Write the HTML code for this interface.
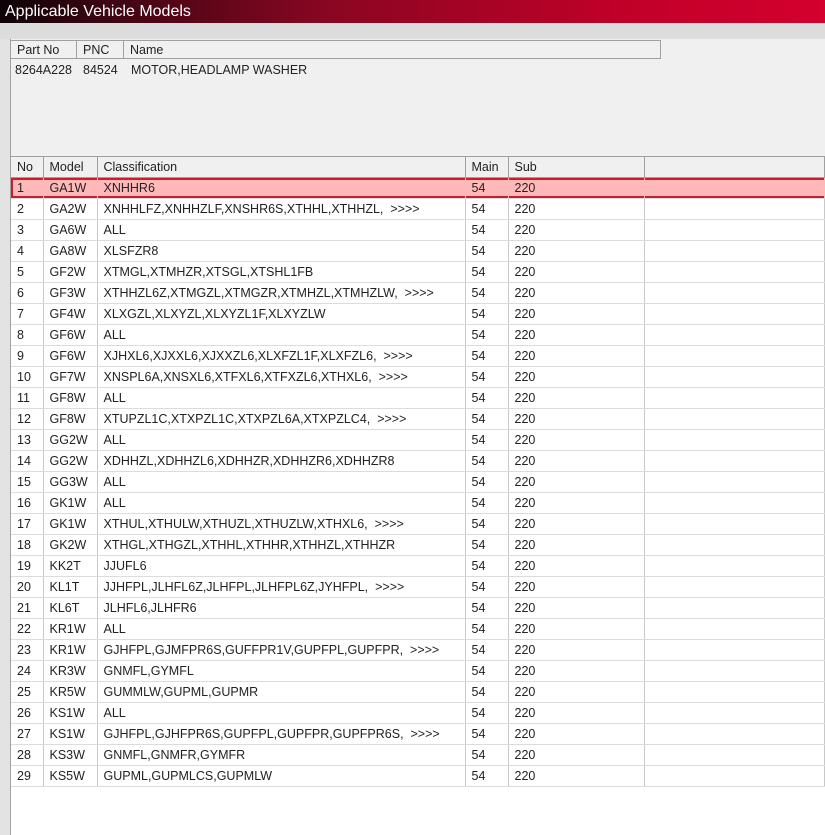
<!DOCTYPE html>
<html><head><meta charset="utf-8"><style>
*{margin:0;padding:0;box-sizing:border-box}
body{width:825px;height:835px;overflow:hidden;background:#fff;font-family:"Liberation Sans",Arial,sans-serif;font-size:12.5px;color:#222;position:relative}
.title{position:absolute;left:0;top:0;width:825px;height:23px;background:linear-gradient(90deg,#0d0306 0%,#3a0612 12%,#8a0622 40%,#c00028 75%,#d4002e 100%);color:#fff;font-size:16px;line-height:23px;padding-left:5px}
.band{position:absolute;left:0;top:23px;width:825px;height:16px;background:#dcdcdc}
.leftstrip{position:absolute;left:0;top:39px;width:11px;height:796px;background:#e3e3e3;border-right:1px solid #a0a0a0}
.upper{position:absolute;left:11px;top:39px;width:814px;height:117px;background:#f0f0f0}
.uh{position:absolute;top:1px;height:19px;border-right:1px solid #a0a0a0;border-bottom:1px solid #a0a0a0;border-top:1px solid #a0a0a0;padding-left:6px;line-height:18px;background:#f0f0f0}
.ur{position:absolute;top:23px;line-height:16px}
table{position:absolute;left:11px;top:156px;border-collapse:collapse;table-layout:fixed;width:814px}
td,th{height:21px;padding:0 0 0 6px;font-weight:normal;text-align:left;white-space:nowrap;overflow:hidden;border-right:1px solid #c8c8c8;border-bottom:1px solid #dcdcdc;line-height:20px}
th{background:#f0f0f0;border-right:1px solid #a0a0a0;border-bottom:1px solid #a0a0a0;border-top:1px solid #a0a0a0;height:21px}
tr.sel td{background:#ffb8b8;box-shadow:inset 0 2px 0 #c02030,inset 0 -2px 0 #c02030;border-right-color:#ffb8b8}
tr.sel td:first-child{box-shadow:inset 0 2px 0 #c02030,inset 0 -2px 0 #c02030,inset 2px 0 0 #c02030}
</style></head><body>
<div class="title">Applicable Vehicle Models</div>
<div class="band"></div>
<div class="leftstrip"></div>
<div class="upper">
<div class="uh" style="left:0;width:66px">Part No</div>
<div class="uh" style="left:66px;width:47px">PNC</div>
<div class="uh" style="left:113px;width:537px">Name</div>
<div class="ur" style="left:4px">8264A228</div>
<div class="ur" style="left:72px">84524</div>
<div class="ur" style="left:120px">MOTOR,HEADLAMP WASHER</div>
</div>
<table>
<colgroup><col style="width:32px"><col style="width:54px"><col style="width:368px"><col style="width:43px"><col style="width:136px"><col></colgroup>
<tr><th>No</th><th>Model</th><th>Classification</th><th>Main</th><th>Sub</th><th></th></tr>
<tr class="sel"><td>1</td><td>GA1W</td><td>XNHHR6</td><td>54</td><td>220</td><td></td></tr>
<tr><td>2</td><td>GA2W</td><td>XNHHLFZ,XNHHZLF,XNSHR6S,XTHHL,XTHHZL,&nbsp; &gt;&gt;&gt;&gt;</td><td>54</td><td>220</td><td></td></tr>
<tr><td>3</td><td>GA6W</td><td>ALL</td><td>54</td><td>220</td><td></td></tr>
<tr><td>4</td><td>GA8W</td><td>XLSFZR8</td><td>54</td><td>220</td><td></td></tr>
<tr><td>5</td><td>GF2W</td><td>XTMGL,XTMHZR,XTSGL,XTSHL1FB</td><td>54</td><td>220</td><td></td></tr>
<tr><td>6</td><td>GF3W</td><td>XTHHZL6Z,XTMGZL,XTMGZR,XTMHZL,XTMHZLW,&nbsp; &gt;&gt;&gt;&gt;</td><td>54</td><td>220</td><td></td></tr>
<tr><td>7</td><td>GF4W</td><td>XLXGZL,XLXYZL,XLXYZL1F,XLXYZLW</td><td>54</td><td>220</td><td></td></tr>
<tr><td>8</td><td>GF6W</td><td>ALL</td><td>54</td><td>220</td><td></td></tr>
<tr><td>9</td><td>GF6W</td><td>XJHXL6,XJXXL6,XJXXZL6,XLXFZL1F,XLXFZL6,&nbsp; &gt;&gt;&gt;&gt;</td><td>54</td><td>220</td><td></td></tr>
<tr><td>10</td><td>GF7W</td><td>XNSPL6A,XNSXL6,XTFXL6,XTFXZL6,XTHXL6,&nbsp; &gt;&gt;&gt;&gt;</td><td>54</td><td>220</td><td></td></tr>
<tr><td>11</td><td>GF8W</td><td>ALL</td><td>54</td><td>220</td><td></td></tr>
<tr><td>12</td><td>GF8W</td><td>XTUPZL1C,XTXPZL1C,XTXPZL6A,XTXPZLC4,&nbsp; &gt;&gt;&gt;&gt;</td><td>54</td><td>220</td><td></td></tr>
<tr><td>13</td><td>GG2W</td><td>ALL</td><td>54</td><td>220</td><td></td></tr>
<tr><td>14</td><td>GG2W</td><td>XDHHZL,XDHHZL6,XDHHZR,XDHHZR6,XDHHZR8</td><td>54</td><td>220</td><td></td></tr>
<tr><td>15</td><td>GG3W</td><td>ALL</td><td>54</td><td>220</td><td></td></tr>
<tr><td>16</td><td>GK1W</td><td>ALL</td><td>54</td><td>220</td><td></td></tr>
<tr><td>17</td><td>GK1W</td><td>XTHUL,XTHULW,XTHUZL,XTHUZLW,XTHXL6,&nbsp; &gt;&gt;&gt;&gt;</td><td>54</td><td>220</td><td></td></tr>
<tr><td>18</td><td>GK2W</td><td>XTHGL,XTHGZL,XTHHL,XTHHR,XTHHZL,XTHHZR</td><td>54</td><td>220</td><td></td></tr>
<tr><td>19</td><td>KK2T</td><td>JJUFL6</td><td>54</td><td>220</td><td></td></tr>
<tr><td>20</td><td>KL1T</td><td>JJHFPL,JLHFL6Z,JLHFPL,JLHFPL6Z,JYHFPL,&nbsp; &gt;&gt;&gt;&gt;</td><td>54</td><td>220</td><td></td></tr>
<tr><td>21</td><td>KL6T</td><td>JLHFL6,JLHFR6</td><td>54</td><td>220</td><td></td></tr>
<tr><td>22</td><td>KR1W</td><td>ALL</td><td>54</td><td>220</td><td></td></tr>
<tr><td>23</td><td>KR1W</td><td>GJHFPL,GJMFPR6S,GUFFPR1V,GUPFPL,GUPFPR,&nbsp; &gt;&gt;&gt;&gt;</td><td>54</td><td>220</td><td></td></tr>
<tr><td>24</td><td>KR3W</td><td>GNMFL,GYMFL</td><td>54</td><td>220</td><td></td></tr>
<tr><td>25</td><td>KR5W</td><td>GUMMLW,GUPML,GUPMR</td><td>54</td><td>220</td><td></td></tr>
<tr><td>26</td><td>KS1W</td><td>ALL</td><td>54</td><td>220</td><td></td></tr>
<tr><td>27</td><td>KS1W</td><td>GJHFPL,GJHFPR6S,GUPFPL,GUPFPR,GUPFPR6S,&nbsp; &gt;&gt;&gt;&gt;</td><td>54</td><td>220</td><td></td></tr>
<tr><td>28</td><td>KS3W</td><td>GNMFL,GNMFR,GYMFR</td><td>54</td><td>220</td><td></td></tr>
<tr><td>29</td><td>KS5W</td><td>GUPML,GUPMLCS,GUPMLW</td><td>54</td><td>220</td><td></td></tr>
</table>
</body></html>
